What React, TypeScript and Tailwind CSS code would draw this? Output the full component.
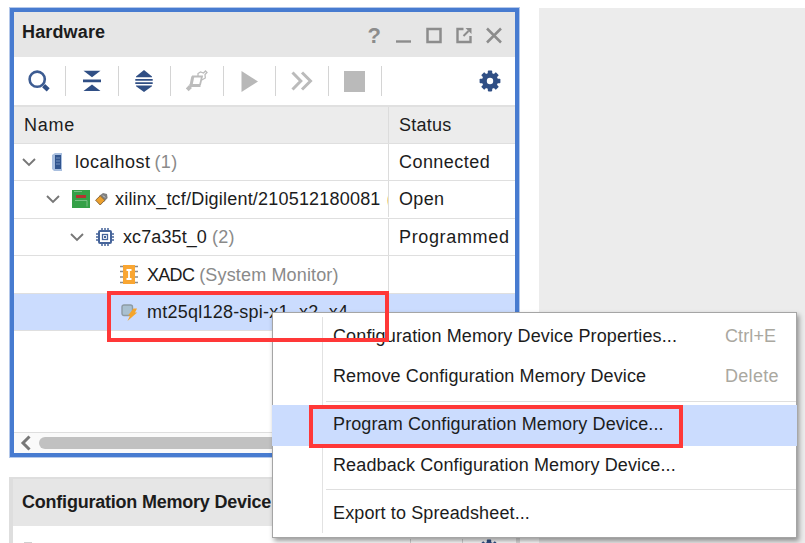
import React from "react";

const Chevron = () => (
  <svg width="14" height="10" viewBox="0 0 14 10" className="shrink-0">
    <path d="M1 2 L7 8 L13 2" fill="none" stroke="#777" strokeWidth="1.9" />
  </svg>
);

const Gear = () => (
  <svg width="22" height="22" viewBox="-11 -11 22 22" className="block">
    <g fill="#304f85">
      {[0, 45, 90, 135].map((a) => (
        <rect key={a} x="-2.2" y="-10.4" width="4.4" height="20.8" rx="0.8" transform={`rotate(${a})`} />
      ))}
      <circle r="8" />
    </g>
    <circle r="3.2" fill="#fff" />
  </svg>
);

const Divider = () => <div className="h-[30px] w-px shrink-0 bg-[#d4d4d4]" />;

const Tool = ({ children }: { children: React.ReactNode }) => (
  <div className="flex w-[51.6px] shrink-0 items-center justify-center">{children}</div>
);

function Toolbar() {
  return (
    <div className="flex h-[48px] shrink-0 items-center bg-white">
      <div className="w-[51px] shrink-0 pl-[14px]">
        <svg width="23" height="24" viewBox="0 0 23 24">
          <circle cx="9.2" cy="10.2" r="7.6" fill="none" stroke="#3d5c92" strokeWidth="2.6" />
          <path d="M15.6 16.6 L20.2 20.8" stroke="#304f85" strokeWidth="4.4" />
        </svg>
      </div>
      <Divider />
      <Tool>
        <svg width="18" height="22" viewBox="0 0 18 22" fill="#304f85">
          <path d="M.5 .8h17L9 7.2zM0 9.6h18v2.6H0zM9 14.4l8.5 6.6H.5z" />
        </svg>
      </Tool>
      <Divider />
      <Tool>
        <svg width="18" height="22" viewBox="0 0 18 22" fill="#304f85">
          <path d="M9 0l8 6.4v.8H1v-.8zM.3 9h17.4v1.8H.3zM.3 12.2h17.4V14H.3zM1 15.6h16v.6L9 22l-8-5.8z" />
        </svg>
      </Tool>
      <Divider />
      <Tool>
        <svg width="22" height="22" viewBox="0 0 22 22" fill="none" stroke="#bcbcbc">
          <path d="M6.8 6.5L5 15.5" strokeWidth="3" />
          <path d="M3.5 15.5H14.5" strokeWidth="3" />
          <path d="M6 6.5H16L14 15" strokeWidth="1.8" />
          <path d="M4.5 16.5l-3.3 3.3" strokeWidth="4" />
          <path d="M12 6V3.5l2.5-1.5 3 1L19.5 1 21 2.5 19 4.6l.3 3.4-3.5 2" strokeWidth="1.3" />
        </svg>
      </Tool>
      <Divider />
      <Tool>
        <svg width="17" height="21" viewBox="0 0 17 21" fill="#b8b8b8">
          <path d="M.5 0L17 10.5L.5 21z" />
        </svg>
      </Tool>
      <Divider />
      <Tool>
        <svg width="22" height="20" viewBox="0 0 22 20" fill="none" stroke="#bbb" strokeWidth="3">
          <path d="M1.5 1.5l8.3 8.5-8.3 8.5M11 1.5l8.5 8.5-8.5 8.5" />
        </svg>
      </Tool>
      <Divider />
      <Tool>
        <div className="h-[21px] w-[21px] bg-[#bababa]" />
      </Tool>
      <Divider />
      <div className="ml-auto pr-[14.5px]">
        <Gear />
      </div>
    </div>
  );
}

const ServerIcon = () => (
  <svg width="11" height="18" viewBox="0 0 11 18">
    <path d="M0 2l3-2h7v18H2l-2-2z" fill="#a9bfdf" />
    <path d="M3 2h6v14H3z" fill="#30548e" />
    <path d="M4 5h4M4 8h4M4 11h4" stroke="#7390bd" />
  </svg>
);

const BoardIcon = () => (
  <svg width="18" height="18" viewBox="0 0 18 18">
    <path d="M0 0h18v18H0z" fill="#35a047" />
    <path d="M2 1.5h8M3 10.5h12v6" stroke="#79c084" fill="none" />
    <path d="M4 5h10v3H4z" fill="#b53230" />
  </svg>
);

const PlugIcon = () => (
  <svg width="13" height="13" viewBox="0 0 13 13">
    <path d="M4 3l4-3 4 1 .6 4L9 9z" fill="#808080" />
    <path d="M.6 7.2l4.6-4.4 4.6 4.4-4.6 4.8z" fill="#eda02c" stroke="#8c6a3c" />
    <path d="M8 2.5l2 2" stroke="#ddd" />
  </svg>
);

const ChipIcon = () => (
  <svg width="18" height="18" viewBox="0 0 18 18" fill="none" stroke="#46649a">
    <path d="M6 0v3M9 0v3M12 0v3M6 15v3M9 15v3M12 15v3M0 6h3M0 9h3M0 12h3M15 6h3M15 9h3M15 12h3" strokeWidth="1.5" />
    <rect x="3" y="3" width="12" height="12" rx="1" strokeWidth="2" />
    <rect x="6.5" y="6.5" width="5" height="5" strokeWidth="1.3" />
    <path d="M8 8h2v2H8z" fill="#46649a" stroke="none" />
  </svg>
);

const XadcIcon = () => (
  <svg width="18" height="19" viewBox="0 0 18 19">
    <path d="M0 1.5h18M0 6.5h18M0 12h18M0 17.5h18" stroke="#8b8b8b" strokeWidth="1.4" />
    <path d="M3 0h12v19H3z" fill="#f9a633" />
    <path d="M6.5 5h5M6.5 14h5M9 4.5v10" stroke="#fff" strokeWidth="1.8" />
  </svg>
);

const FlashIcon = () => (
  <svg width="17" height="17" viewBox="0 0 17 17">
    <rect x="1" y="1" width="10.5" height="10.5" rx="2" fill="#a9c0d0" stroke="#8d9aa3" strokeWidth="1.4" />
    <path d="M12.5 4.5H16l-2 4h2.2L6.5 17l2.6-5.5H7z" fill="#f5a52c" />
  </svg>
);

const Row = ({ className, status, children }: { className: string; status?: React.ReactNode; children: React.ReactNode }) => (
  <div className={`flex shrink-0 border-b border-[#dfdfdf] ${className}`}>
    <div className="flex w-[374px] shrink-0 items-center overflow-hidden whitespace-nowrap">{children}</div>
    <div className="flex flex-1 items-center border-l border-[#dcdcdc] pl-[10px] whitespace-nowrap">{status}</div>
  </div>
);

function HardwarePanel() {
  return (
    <section className="flex h-[449px] w-[509px] shrink-0 flex-col border-4 border-[#477bd0] bg-white shadow-[0_0_0_1px_#b4c8ea]">
      <header className="flex h-[45px] shrink-0 items-center bg-[#e6e6e6] pl-[8px]">
        <h1 className="pb-[5px] font-bold tracking-[0.15px]">Hardware</h1>
        <div className="ml-auto flex items-center pt-[2px] pr-[13px] text-[#8c8c8c]">
          <span className="mr-[15px] text-[22px] leading-[22px] font-bold">?</span>
          <svg width="106" height="17" viewBox="0 0 106 17" fill="none" stroke="#8c8c8c">
            <path d="M0 14.5h15" strokeWidth="2.4" />
            <path d="M31.5 2h13v13h-13z" strokeWidth="2.5" />
            <path d="M67.5 2h-6v13h13V9" strokeWidth="2.4" />
            <path d="M67.5 9l5-5" strokeWidth="2" />
            <path d="M69.5 1h6v6z" fill="#8c8c8c" stroke="none" />
            <path d="M91 1.5l14 14M105 1.5l-14 14" strokeWidth="2.5" />
          </svg>
        </div>
      </header>
      <Toolbar />
      <Row
        className="h-[39px] border-t-2 border-t-[#e0e0e0] bg-[#ececec]"
        status={<span className="tracking-[0.25px]">Status</span>}
      >
        <span className="pl-[10px] tracking-[0.75px]">Name</span>
      </Row>
      <Row className="h-[37px]" status={<span className="tracking-[0.45px]">Connected</span>}>
        <div className="ml-[8px] flex"><Chevron /></div>
        <div className="ml-[16px]"><ServerIcon /></div>
        <span className="ml-[12px] tracking-[0.5px]">localhost</span>
        <span className="ml-[4px] tracking-[0.3px] text-[#8a8a8a]">(1)</span>
      </Row>
      <Row className="h-[38px] pb-[1px]" status={<span className="tracking-[0.35px]">Open</span>}>
        <div className="ml-[32px] flex"><Chevron /></div>
        <div className="ml-[12px]"><BoardIcon /></div>
        <div className="ml-[5px]"><PlugIcon /></div>
        <span className="ml-[7px] tracking-[0.2px]">xilinx_tcf/Digilent/210512180081</span>
        <span className="ml-[6px] text-[#dca35d]">(</span>
      </Row>
      <Row className="h-[37px]" status={<span className="tracking-[0.65px]">Programmed</span>}>
        <div className="ml-[56px] flex"><Chevron /></div>
        <div className="ml-[12px]"><ChipIcon /></div>
        <span className="ml-[9px] tracking-[0.1px]">xc7a35t_0</span>
        <span className="ml-[5px] tracking-[0.3px] text-[#8a8a8a]">(2)</span>
      </Row>
      <Row className="h-[38px]">
        <div className="ml-[106px]"><XadcIcon /></div>
        <span className="ml-[9px] tracking-[-0.7px]">XADC</span>
        <span className="ml-[5px] tracking-[0.15px] text-[#8a8a8a]">(System Monitor)</span>
      </Row>
      <Row className="h-[37px] bg-[#cbdcfe]">
        <div className="ml-[107px]"><FlashIcon /></div>
        <span className="ml-[9px] tracking-[0.23px]">mt25ql128-spi-x1_x2_x4</span>
      </Row>
      <div className="flex-1" />
      <div className="flex h-[21px] shrink-0 items-center border-t border-[#dedede] bg-[#fafafa] pl-[6px]">
        <svg width="11" height="16" viewBox="0 0 11 16">
          <path d="M9.5 1.5L3 8l6.5 6.5" fill="none" stroke="#777" strokeWidth="3" />
        </svg>
        <div className="mb-[1px] ml-[8px] h-[12px] w-[440px] rounded-full bg-[#c1c1c1]" />
      </div>
    </section>
  );
}

function PropertiesPanel() {
  return (
    <section className="mt-[20px] -ml-px flex h-[66px] w-[511px] shrink-0 flex-col border-t-2 border-r-4 border-l-4 border-[#dedede] bg-white">
      <header className="flex h-[47px] shrink-0 items-center bg-[#e6e6e6] pb-[2px] pl-[9px]">
        <h2 className="font-bold tracking-[-0.22px] whitespace-nowrap">Configuration Memory Device</h2>
      </header>
      <div className="flex h-[48px] shrink-0 items-start pt-[13px]">
        <div className="ml-[11px] h-px w-[8px] translate-y-[3px] bg-[#d0d0d0]" />
        <div className="ml-[378px] h-[30px] w-px bg-[#d4d4d4]" />
        <div className="ml-[51px] h-[30px] w-px bg-[#d4d4d4]" />
        <div className="ml-[15px]"><Gear /></div>
      </div>
    </section>
  );
}

const MenuItem = ({ className, shortcut, children }: { className: string; shortcut?: React.ReactNode; children: React.ReactNode }) => (
  <div className={`flex shrink-0 items-center pl-[60px] whitespace-nowrap ${className}`}>
    <span className="tracking-[0.12px]">{children}</span>
    {shortcut && <span className="ml-auto w-[71px] text-[#aaa89f]">{shortcut}</span>}
  </div>
);

const MenuRule = () => <div className="ml-[53px] h-px shrink-0 bg-[#dfdfdf]" />;

function ContextMenu() {
  return (
    <div className="absolute top-[312px] left-[272px] h-[226px] w-[525px] border border-[#a5a5a5] bg-white shadow-[2px_3px_5px_rgba(0,0,0,0.4)]">
      <div className="absolute top-[4px] left-[49px] h-[216px] w-px bg-[#e2e2e2]" />
      <div className="relative flex h-full flex-col">
        <MenuItem className="mt-[3px] h-[40px]" shortcut={<span className="tracking-[0.1px]">Ctrl+E</span>}>
          Configuration Memory Device Properties...
        </MenuItem>
        <MenuItem className="mb-[4px] h-[41px] pb-[1px]" shortcut={<span className="tracking-[0.3px]">Delete</span>}>
          Remove Configuration Memory Device
        </MenuItem>
        <MenuRule />
        <MenuItem className="mt-[3px] -mx-px h-[41px] bg-[#cbdcfe] pb-[3px] pl-[61px]">Program Configuration Memory Device...</MenuItem>
        <MenuItem className="mb-[3px] h-[40px] pb-[2px]">Readback Configuration Memory Device...</MenuItem>
        <MenuRule />
        <MenuItem className="mt-[3px] h-[40px]">Export to Spreadsheet...</MenuItem>
      </div>
    </div>
  );
}

export default function App() {
  return (
    <div className="relative flex h-[543px] w-[805px] overflow-hidden bg-white font-['Liberation_Sans',Arial,sans-serif] text-[18px] leading-[22px] text-[#1c1c1c]">
      <div className="flex w-[539px] shrink-0 flex-col pt-[8px] pl-[10px]">
        <HardwarePanel />
        <PropertiesPanel />
      </div>
      <div className="mt-[8px] flex-1 bg-[#ececec]" />
      <ContextMenu />
      <div className="absolute top-[291px] left-[107px] h-[51px] w-[282px] border-4 border-[#ff3838]" />
      <div className="absolute top-[405px] left-[309px] h-[43px] w-[374px] border-4 border-[#ff3838]" />
    </div>
  );
}
